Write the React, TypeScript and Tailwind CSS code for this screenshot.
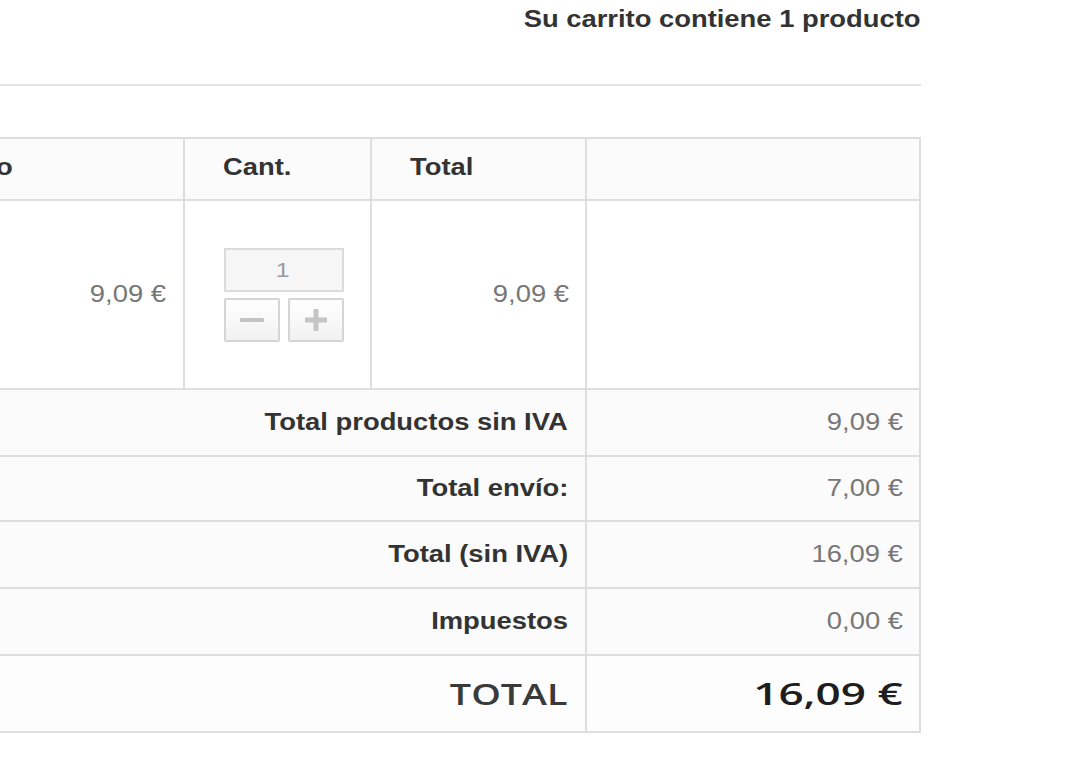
import React from "react";

const summary = [
  { label: "Total productos sin IVA", value: "9,09 €", h: "h-[67px]" },
  { label: "Total envío:", value: "7,00 €", h: "h-[65px]" },
  { label: "Total (sin IVA)", value: "16,09 €", h: "h-[67px]" },
  { label: "Impuestos", value: "0,00 €", h: "h-[67px]" },
];

// the shop text is rendered a bit wide, so stretch it horizontally
function R({ children }: { children: React.ReactNode }) {
  return <span className="inline-block origin-right scale-x-[1.19]">{children}</span>;
}

function L({ children }: { children: React.ReactNode }) {
  return <span className="inline-block origin-left scale-x-[1.19]">{children}</span>;
}

function Minus() {
  return (
    <svg width="26" height="26" viewBox="0 0 26 26">
      <rect x="1" y="11" width="24" height="4" rx="1" fill="#c4c4c4" />
    </svg>
  );
}

function Plus() {
  return (
    <svg width="26" height="26" viewBox="0 0 26 26">
      <rect x="2" y="10.5" width="22" height="5" rx="1" fill="#c4c4c4" />
      <rect x="10.5" y="2" width="5" height="22" rx="1" fill="#c4c4c4" />
    </svg>
  );
}

export default function App() {
  return (
    <div className="w-[1079px] h-[771px] bg-white font-['Liberation_Sans',Arial,sans-serif] text-[#333]">
      <div className="w-[921px]">
        {/* cart heading */}
        <h1 className="pt-[5px] text-right text-[23px] leading-[28px] font-bold">
          <R>Su carrito contiene 1 producto</R>
        </h1>
        <div className="mt-[51px] border-t-2 border-[#e3e3e3]" />

        {/* cart table, first columns run off the left edge */}
        <div className="mt-[51px] overflow-hidden">
          <div className="ml-[-216px] w-[1137px] grid grid-cols-[401px_187px_215px_332px] border-t-2 border-r-2 border-[#dedede] text-[23px]">
            {/* header */}
            <div className="h-[62px] flex items-center pb-[4px] pl-[37px] font-bold bg-[#fbfbfb] border-r-2 border-b-2 border-[#dedede]">
              <L>Precio unitario</L>
            </div>
            <div className="h-[62px] flex items-center pb-[4px] pl-[38px] font-bold bg-[#fbfbfb] border-r-2 border-b-2 border-[#dedede]">
              <L>Cant.</L>
            </div>
            <div className="h-[62px] flex items-center pb-[4px] pl-[38px] font-bold bg-[#fbfbfb] border-r-2 border-b-2 border-[#dedede]">
              <L>Total</L>
            </div>
            <div className="h-[62px] bg-[#fbfbfb] border-b-2 border-[#dedede]" />

            {/* product row */}
            <div className="h-[189px] flex items-center justify-end pr-[17px] text-[#777] border-r-2 border-b-2 border-[#dedede]">
              <R>9,09 €</R>
            </div>
            <div className="h-[189px] flex flex-col justify-center pl-[39px] border-r-2 border-b-2 border-[#dedede]">
              <div className="w-[120px] h-[44px] flex items-center justify-center bg-[#f6f6f6] border-2 border-[#dcdcdc] text-[21px] text-[#9a9a9a]">
                <R>1</R>
              </div>
              <div className="mt-[6px] flex gap-[8px]">
                <button className="w-[56px] h-[44px] flex items-center justify-center bg-gradient-to-b from-white to-[#f1f1f1] border-2 border-[#d6d6d6] rounded-[2px]">
                  <Minus />
                </button>
                <button className="w-[56px] h-[44px] flex items-center justify-center bg-gradient-to-b from-white to-[#f1f1f1] border-2 border-[#d6d6d6] rounded-[2px]">
                  <Plus />
                </button>
              </div>
            </div>
            <div className="h-[189px] flex items-center justify-end pr-[16px] text-[#777] border-r-2 border-b-2 border-[#dedede]">
              <R>9,09 €</R>
            </div>
            <div className="h-[189px] border-b-2 border-[#dedede]" />

            {/* totals */}
            {summary.map((r) => (
              <React.Fragment key={r.label}>
                <div className={`${r.h} col-span-3 flex items-center justify-end pr-[17px] font-bold bg-[#fbfbfb] border-r-2 border-b-2 border-[#dedede]`}>
                  <R>{r.label}</R>
                </div>
                <div className={`${r.h} flex items-center justify-end pr-[16px] text-[#777] bg-[#fbfbfb] border-b-2 border-[#dedede]`}>
                  <R>{r.value}</R>
                </div>
              </React.Fragment>
            ))}
            <div className="h-[77px] col-span-3 flex items-center justify-end pr-[17px] font-['Open_Sans',sans-serif] font-semibold text-[29px] text-[#3a3a3a] bg-[#fdfdfd] border-r-2 border-b-2 border-[#dedede]">
              <span className="inline-block origin-right scale-x-[1.3]">TOTAL</span>
            </div>
            <div className="h-[77px] flex items-center justify-end pr-[16px] font-['Open_Sans',sans-serif] font-semibold text-[30px] text-[#1e1e1e] bg-[#fdfdfd] border-b-2 border-[#dedede]">
              <span className="inline-block origin-right scale-x-[1.47]">16,09 €</span>
            </div>
          </div>
        </div>
      </div>
    </div>
  );
}
